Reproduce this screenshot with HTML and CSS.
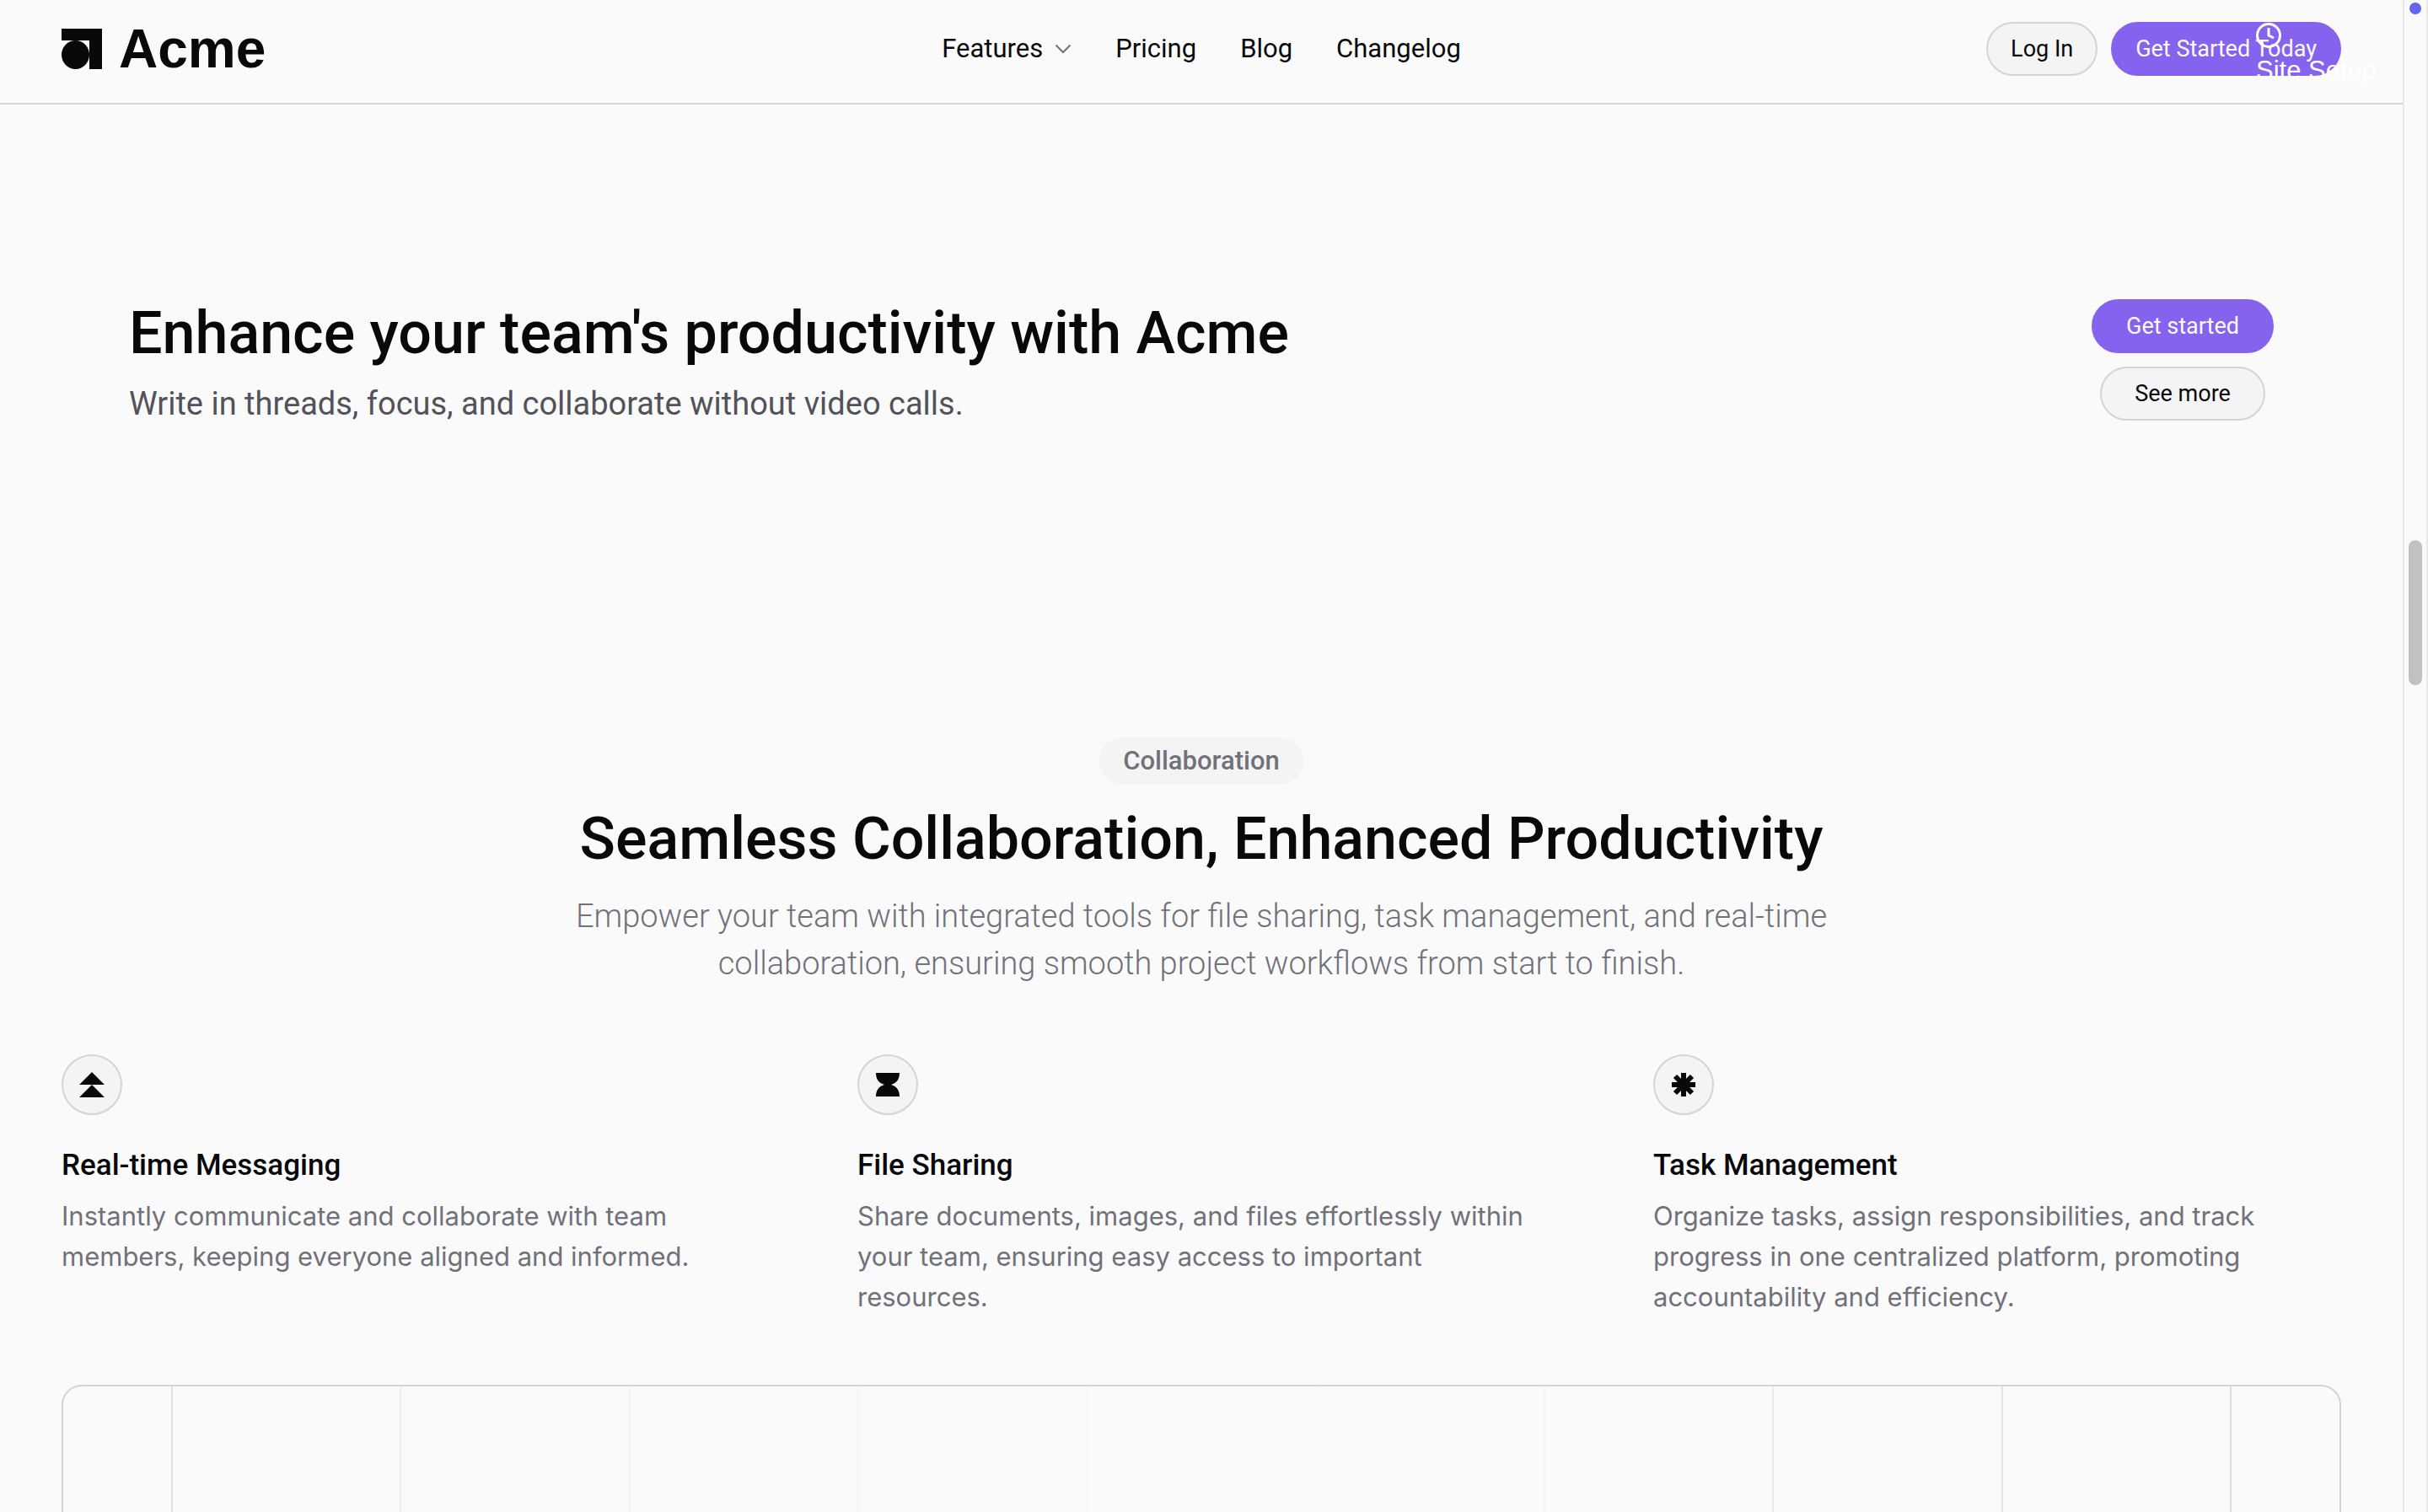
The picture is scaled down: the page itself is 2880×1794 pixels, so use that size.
FILE: index.html
```html
<!DOCTYPE html>
<html lang="en">
<head>
<meta charset="utf-8">
<title>Acme</title>
<link rel="stylesheet" href="styles.css">
</head>
<body>
<div class="frame">
  <div class="page">
    <header class="header">
      <a class="logo" href="#">
        <svg class="logo-mark" viewBox="0 0 48 48" aria-hidden="true"><path d="M0 0h48v48H33V14H0z"/><ellipse cx="16.500" cy="31" rx="16.500" ry="17"/></svg>
        Acme
      </a>
      <nav class="nav">
        <a class="nav-link" href="#">Features
          <svg class="chevron" viewBox="0 0 20 12" aria-hidden="true"><path d="M1.500 1.500 10 10l8.500-8.500"/></svg>
        </a>
        <a class="nav-link" href="#">Pricing</a>
        <a class="nav-link" href="#">Blog</a>
        <a class="nav-link" href="#">Changelog</a>
      </nav>
      <div class="actions">
        <button class="btn btn-light" type="button">Log In</button>
        <button class="btn btn-primary" type="button">Get Started Today</button>
      </div>
      <a class="setup" href="#">
        <svg class="clock" viewBox="0 0 30 30" aria-hidden="true"><circle cx="15" cy="15" r="13.500"/><path d="M15 6v9l6 3"/></svg>
        Site Setup
      </a>
    </header>
    <main>
      <section class="callout">
        <div class="callout-text">
          <h2 class="title">Enhance your team's productivity with Acme</h2>
          <p class="callout-sub">Write in threads, focus, and collaborate without video calls.</p>
        </div>
        <div class="callout-actions">
          <button class="btn btn-primary btn-wide" type="button">Get started</button>
          <button class="btn btn-light btn-wide" type="button">See more</button>
        </div>
      </section>
      <section class="features">
        <div class="intro">
          <span class="tag">Collaboration</span>
          <h2 class="title">Seamless Collaboration, Enhanced Productivity</h2>
          <p class="intro-sub">Empower your team with integrated tools for file sharing, task management, and real-time collaboration, ensuring smooth project workflows from start to finish.</p>
        </div>
        <div class="columns">
          <article class="feature">
            <span class="badge"><svg viewBox="0 0 30 30" aria-hidden="true"><path d="M15 0l15 15H0zM15 15l15 15H0z"/></svg></span>
            <h3 class="feature-title">Real-time Messaging</h3>
            <p class="feature-text">Instantly communicate and collaborate with team members, keeping everyone aligned and informed.</p>
          </article>
          <article class="feature">
            <span class="badge"><svg viewBox="0 0 30 30" aria-hidden="true"><path d="M1 1h28c0 7-3 12-10 14 7 2 10 7 10 14H1c0-7 3-12 10-14C4 13 1 8 1 1z"/></svg></span>
            <h3 class="feature-title">File Sharing</h3>
            <p class="feature-text">Share documents, images, and files effortlessly within your team, ensuring easy access to important resources.</p>
          </article>
          <article class="feature">
            <span class="badge"><svg class="star" viewBox="0 0 30 30" aria-hidden="true"><path d="M15 1v28M1 15h28M5 5l20 20M25 5L5 25"/></svg></span>
            <h3 class="feature-title">Task Management</h3>
            <p class="feature-text">Organize tasks, assign responsibilities, and track progress in one centralized platform, promoting accountability and efficiency.</p>
          </article>
        </div>
        <div class="preview">
          <i class="rule rule-1"></i><i class="rule rule-2"></i><i class="rule rule-3"></i><i class="rule rule-4"></i><i class="rule rule-5"></i>
          <i class="rule rule-6"></i><i class="rule rule-4"></i><i class="rule rule-7"></i><i class="rule rule-8"></i><i class="rule rule-9"></i>
        </div>
      </section>
    </main>
  </div>
  <div class="rail"><span class="dot"></span><span class="thumb"></span></div>
</div>
</body>
</html>
```

FILE: styles.css
```css
* { box-sizing: border-box; margin: 0; }
body {
  background: #fafafa;
  color: #09090b;
  font-family: Roboto, "Liberation Sans", sans-serif;
  font-size: 31px;
}
a { color: inherit; text-decoration: none; }
.frame {
  display: grid;
  grid-template-columns: 1fr 30px;
  height: 100vh;
  overflow: hidden;
}
.page { min-width: 0; overflow: hidden; }
.header {
  position: relative;
  display: grid;
  grid-template-columns: 1fr auto 1fr;
  align-items: center;
  height: 124px;
  padding: 0 73px 6px;
  border-bottom: 2px solid #d4d4d8;
}
.logo {
  display: flex;
  align-items: center;
  gap: 20px;
  font: 700 64px/72px "Liberation Sans", sans-serif;
}
.logo-mark { width: 48px; height: 48px; fill: #09090b; }
.nav { display: flex; gap: 52px; line-height: 40px; }
.nav-link { display: flex; align-items: center; gap: 14px; }
.chevron { width: 20px; height: 12px; fill: none; stroke: #71717a; stroke-width: 2; }
.actions { display: flex; justify-content: flex-end; gap: 16px; }
.btn {
  height: 64px;
  padding: 0 27px;
  border: 2px solid #8563ee;
  border-radius: 32px;
  font: 400 27px/36px Roboto, sans-serif;
  white-space: nowrap;
}
.btn-primary { background: #8563ee; color: #fafafa; }
.btn-light { background: #f4f4f4; border-color: #d4d4d8; color: #09090b; }
.btn-wide { padding: 0 39px; }
.setup {
  position: absolute;
  top: 26px;
  right: 31px;
  display: flex;
  flex-direction: column;
  gap: 6px;
  font: 400 31px/40px "Liberation Sans", sans-serif;
  color: #fff;
}
.clock { width: 30px; height: 32px; fill: none; stroke: #fff; stroke-width: 3; }
.callout {
  display: flex;
  justify-content: space-between;
  align-items: flex-start;
  padding: 231px 153px 0;
}
.title { font-size: 70px; font-weight: 500; line-height: 80px; }
.callout-sub { margin-top: 14px; font-size: 38px; line-height: 60px; color: #52525b; }
.callout-actions { display: flex; flex-direction: column; align-items: center; gap: 16px; }
.features { padding: 366px 73px 0; }
.intro { display: flex; flex-direction: column; align-items: center; text-align: center; }
.tag {
  padding: 0 28px;
  border-radius: 28px;
  background: #f4f4f4;
  color: #71717a;
  font-weight: 500;
  line-height: 56px;
}
.intro .title { margin-top: 24px; }
.intro-sub {
  max-width: 1536px;
  margin-top: 24px;
  font-size: 38px;
  font-weight: 300;
  line-height: 56px;
  color: #71717a;
}
.columns {
  display: grid;
  grid-template-columns: repeat(3, 1fr);
  gap: 128px;
  margin-top: 80px;
}
.badge {
  display: grid;
  place-items: center;
  width: 72px;
  height: 72px;
  border: 2px solid #d4d4d8;
  border-radius: 50%;
  background: #f4f4f4;
}
.badge svg { width: 30px; height: 30px; fill: #09090b; }
.badge .star { stroke: #09090b; stroke-width: 6; }
.feature-title { margin-top: 36px; font-size: 35px; font-weight: 500; line-height: 48px; }
.feature-text { margin-top: 12px; font-family: Inter, sans-serif; line-height: 48px; color: #71717a; }
.preview {
  display: flex;
  justify-content: space-between;
  height: 800px;
  margin-top: 80px;
  padding: 0 128px;
  border: 2px solid #d4d4d8;
  border-radius: 24px;
}
.rule { width: 2px; }
.rule-1 { background: #e2e2e4; }
.rule-2 { background: #eeeeef; }
.rule-3 { background: #f3f3f3; }
.rule-4 { background: #f5f5f5; }
.rule-5 { background: #f7f7f7; }
.rule-6 { background: #f9f9f9; }
.rule-7 { background: #ebebec; }
.rule-8 { background: #e4e4e6; }
.rule-9 { background: #dcdcde; }
.rail {
  position: relative;
  border: solid #e8e8e8;
  border-width: 0 2px;
}
.dot, .thumb { position: absolute; left: 50%; transform: translateX(-50%); }
.dot { top: 3px; width: 14px; height: 14px; border-radius: 50%; background: #6366ec; }
.thumb { top: 641px; width: 16px; height: 172px; border-radius: 8px; background: #c1c1c1; }
```
